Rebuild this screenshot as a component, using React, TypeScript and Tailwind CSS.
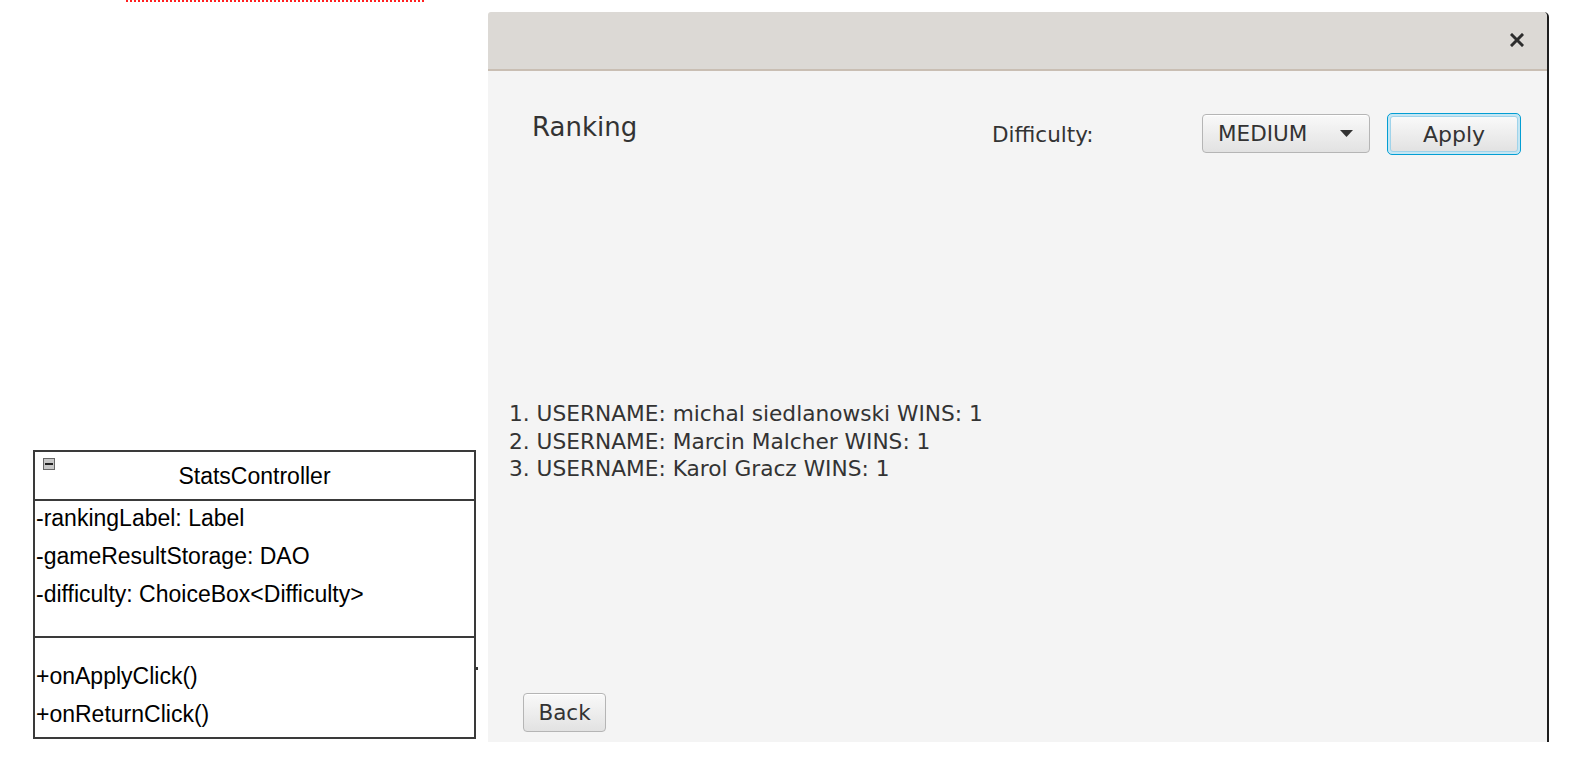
import React from "react";

const fx = { fontFamily: '"DejaVu Sans", Verdana, sans-serif' };
const uml = { fontFamily: '"Liberation Sans", Arial, sans-serif' };

function UmlBox() {
  return (
    <div
      className="relative ml-[33px] mb-[19px] mt-auto w-[443px] h-[289px] border-2 border-[#3a3a3a] bg-white text-black flex flex-col"
      style={uml}
    >
      <div className="relative h-[47px] flex items-center justify-center text-[23px] leading-none">
        <div className="absolute left-[8px] top-[6px] w-[12px] h-[12px] bg-[#c8c8c8] border border-[#666] flex items-center justify-center">
          <div className="w-[8px] h-[2px] bg-[#222]" />
        </div>
        <span className="mt-[2px]">StatsController</span>
      </div>
      <div className="h-[137px] border-t-2 border-[#3a3a3a] flex flex-col pl-[1px] text-[23px]">
        <div className="h-[38px] leading-[38px] -mt-[2px]">-rankingLabel: Label</div>
        <div className="h-[38px] leading-[38px]">-gameResultStorage: DAO</div>
        <div className="h-[38px] leading-[38px]">-difficulty: ChoiceBox&lt;Difficulty&gt;</div>
      </div>
      <div className="flex-1 border-t-2 border-[#3a3a3a] flex flex-col pl-[1px] pt-[19px] text-[23px]">
        <div className="h-[38px] leading-[38px]">+onApplyClick()</div>
        <div className="h-[38px] leading-[38px]">+onReturnClick()</div>
      </div>
      <div className="absolute right-[-4px] top-[215px] w-[2px] h-[3px] bg-[#333]" />
    </div>
  );
}

function Window() {
  return (
    <div className="mt-[12px] w-[1061px] h-[730px] flex flex-col border-r-2 border-[#1e1e1e] rounded-tr-[5px] rounded-tl-[3px] overflow-hidden" style={fx}>
      <div className="h-[59px] bg-[#dcd9d5] flex items-center justify-end pr-[23px] border-b-2 border-[#c9beb3]">
        <svg width="14" height="14" viewBox="0 0 14 14" className="mt-[-2px]">
          <path d="M2 2 L12 12 M12 2 L2 12" stroke="#2d2d2d" strokeWidth="3" strokeLinecap="square" />
        </svg>
      </div>
      <div className="flex-1 bg-[#f4f4f4] flex flex-col">
        <div className="flex items-start pt-[42px] pl-[44px]">
          <div className="w-[460px] text-[26px] leading-[30px] -mt-[1px] text-[#333]">Ranking</div>
          <div className="w-[210px] text-[21.5px] leading-[30px] mt-[7px] text-[#333]">Difficulty:</div>
          <div className="mt-[1px] w-[168px] h-[39px] flex items-center justify-between pl-[15px] pr-[16px] rounded-[4px] border border-[#b5b5b5] bg-gradient-to-b from-[#f9f9f9] to-[#e2e2e2] text-[#333] shadow-[inset_0_1px_0_#ffffff]">
            <span className="text-[21.5px] leading-none">MEDIUM</span>
            <svg width="13" height="7" viewBox="0 0 13 7">
              <path d="M0 0 L13 0 L6.5 7 Z" fill="#333" />
            </svg>
          </div>
          <div className="ml-[17px] w-[134px] h-[42px] rounded-[5px] border border-[#039ed3] p-[2px] bg-[#c5e6f3]">
            <div className="w-full h-full rounded-[3px] border border-[#9fd3ea] bg-gradient-to-b from-[#f9f9f9] to-[#e2e2e2] flex items-center justify-center text-[22px] text-[#333]">
              Apply
            </div>
          </div>
        </div>
        <div className="mt-[245px] pl-[21px] text-[21.7px] leading-[27.5px] text-[#333]">
          <div>1. USERNAME: michal siedlanowski WINS: 1</div>
          <div>2. USERNAME: Marcin Malcher WINS: 1</div>
          <div>3. USERNAME: Karol Gracz WINS: 1</div>
        </div>
        <div className="mt-auto mb-[10px] ml-[35px]">
          <div className="w-[83px] h-[39px] flex items-center justify-center rounded-[4px] border border-[#b5b5b5] bg-gradient-to-b from-[#f9f9f9] to-[#e2e2e2] text-[#333] shadow-[inset_0_1px_0_#ffffff]">
            <span className="text-[21.5px] leading-none">Back</span>
          </div>
        </div>
      </div>
    </div>
  );
}

export default function App() {
  return (
    <div className="w-[1584px] h-[758px] bg-white flex overflow-hidden">
      <div className="w-[488px] h-[758px] flex flex-col">
        <div className="ml-[126px] w-[298px] h-[2px] border-t-2 border-dotted border-[#ff2020]" />
        <UmlBox />
      </div>
      <Window />
    </div>
  );
}
